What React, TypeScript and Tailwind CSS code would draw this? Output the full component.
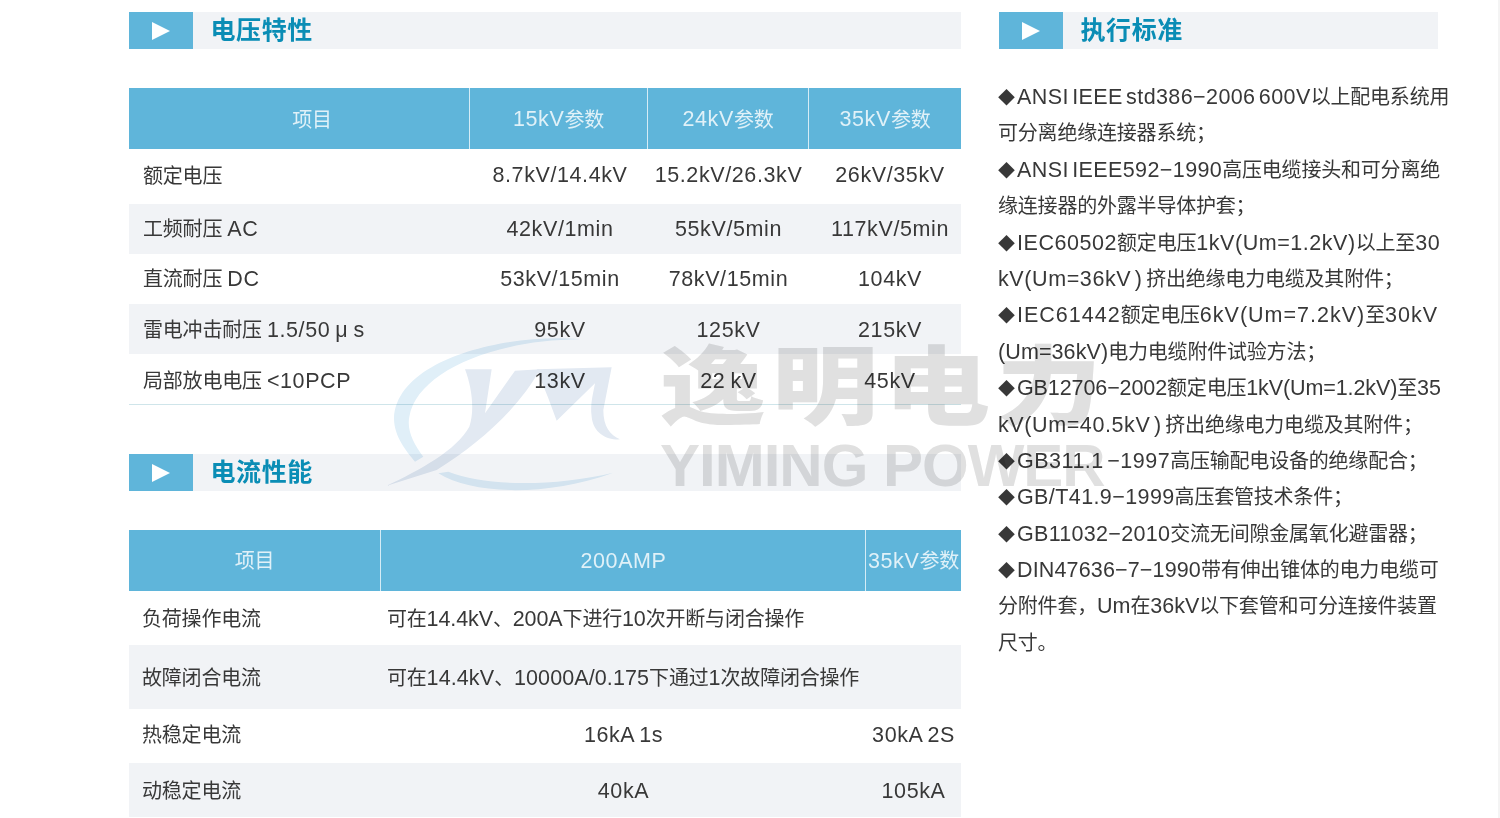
import React from "react";

const font = "font-['Liberation_Sans','Noto_Sans_CJK_SC',sans-serif]";

const voltageRows = [
  { cls: "h-[55px] pb-[2px]", cells: ["额定电压", "8.7kV/14.4kV", "15.2kV/26.3kV", "26kV/35kV"] },
  { cls: "h-[50px] bg-[#f1f3f6]", cells: ["工频耐压 AC", "42kV/1min", "55kV/5min", "117kV/5min"] },
  { cls: "h-[50px]", cells: ["直流耐压 DC", "53kV/15min", "78kV/15min", "104kV"] },
  { cls: "h-[50px] bg-[#f1f3f6] pt-[2px]", cells: ["雷电冲击耐压 1.5/50 μ s", "95kV", "125kV", "215kV"] },
  { cls: "h-[50px] pt-[4px]", cells: ["局部放电电压 <10PCP", "13kV", "22 kV", "45kV"] },
];

// the lines are justified in the picture, so each has its own latin spacing
const standards = [
  { text: "◆ANSI IEEE std386−2006 600V以上配电系统用", track: "tracking-[0.4px]" },
  { text: "可分离绝缘连接器系统；", track: "tracking-[0.6px]" },
  { text: "◆ANSI IEEE592−1990高压电缆接头和可分离绝", track: "tracking-[0.4px]" },
  { text: "缘连接器的外露半导体护套；", track: "tracking-[0.6px]" },
  { text: "◆IEC60502额定电压1kV(Um=1.2kV)以上至30", track: "tracking-[0.55px]" },
  { text: "kV(Um=36kV ) 挤出绝缘电力电缆及其附件；", track: "tracking-[0.6px]" },
  { text: "◆IEC61442额定电压6kV(Um=7.2kV)至30kV", track: "tracking-[1px]" },
  { text: "(Um=36kV)电力电缆附件试验方法；", track: "tracking-[0.1px]" },
  { text: "◆GB12706−2002额定电压1kV(Um=1.2kV)至35", track: "tracking-[-0.1px]" },
  { text: "kV(Um=40.5kV ) 挤出绝缘电力电缆及其附件；", track: "tracking-[0.6px]" },
  { text: "◆GB311.1 −1997高压输配电设备的绝缘配合；", track: "tracking-[0.5px]" },
  { text: "◆GB/T41.9−1999高压套管技术条件；", track: "tracking-[0.4px]" },
  { text: "◆GB11032−2010交流无间隙金属氧化避雷器；", track: "tracking-[0.3px]" },
  { text: "◆DIN47636−7−1990带有伸出锥体的电力电缆可", track: "tracking-[0.15px]" },
  { text: "分附件套，Um在36kV以下套管和可分连接件装置", track: "tracking-[0px]" },
  { text: "尺寸。", track: "tracking-[0.6px]" },
];

// latin and chinese runs have different size and spacing in the picture
function Mix({ text, track = "tracking-[0.6px]" }: { text: string; track?: string }) {
  const parts = text.split(/([\u4e00-\u9fff；，。、]+|◆)/).filter(Boolean);
  return (
    <>
      {parts.map((part, i) => {
        if (part === "◆") {
          return <span key={i} className="mr-[2px] text-[17px] tracking-normal">{part}</span>;
        }
        if (/[\u4e00-\u9fff；，。、]/.test(part)) {
          return <span key={i} className="text-[20px] tracking-[-0.2px]">{part}</span>;
        }
        return <span key={i} className={`text-[21.5px] ${track}`}>{part}</span>;
      })}
    </>
  );
}

function Heading({ title }: { title: string }) {
  return (
    <div className="flex h-[37px] items-center bg-[#f1f3f6]">
      <div className="flex h-full w-16 items-center justify-center bg-[#5fb5da]">
        <div className="h-0 w-0 border-y-[9.5px] border-l-[18px] border-y-transparent border-l-white" />
      </div>
      <span className="ml-[17.5px] text-[25px] leading-none font-semibold tracking-[0.6px] text-[#0a8db5]">
        {title}
      </span>
    </div>
  );
}

function Watermark() {
  return (
    <div className="pointer-events-none absolute top-[330px] left-[380px] flex mix-blend-multiply">
      <svg width="250" height="170" viewBox="0 0 750 510">
        <path
          d="M600 28C400 8 50 80 42 265C42 320 80 365 105 395L130 380C100 340 80 300 88 260C110 130 330 30 600 28Z"
          fill="#e0eff8"
        />
        <path d="M175 430C280 495 500 500 700 428C520 470 320 470 205 425Z" fill="#e0eff8" />
        <path
          d="M255 118L335 118L315 250L405 122L480 118C420 230 300 340 170 420L18 468C120 420 230 360 268 290C285 240 275 170 255 118Z"
          fill="#e2e9f2"
        />
        <path
          d="M470 118L695 112L670 240C670 290 690 315 720 328C680 330 640 310 635 260C630 220 640 190 645 160L530 272L505 205Z"
          fill="#e2e9f2"
        />
      </svg>
      <div className="ml-[30px] flex w-[450px] flex-col">
        <span className="mt-[15px] h-[91px] origin-top scale-y-[0.81] text-[106px] leading-[106px] font-black tracking-[6px] whitespace-nowrap text-[#e0e0e0]">
          逸明电力
        </span>
        <span className="text-[60px] leading-[60px] font-bold tracking-[-1px] whitespace-nowrap text-[#e0e0e0]">
          YIMING POWER
        </span>
      </div>
    </div>
  );
}

export default function App() {
  return (
    <div className={`${font} relative flex h-[818px] w-[1500px] overflow-hidden border-r-2 border-[#f4f4f4] bg-white pt-3 pl-[129px] text-[#383838]`}>
      <div className="w-[832px] [word-spacing:-1.5px]">
        <Heading title="电压特性" />

        {/* voltage table */}
        <div className="mt-[39px] flex h-[61px] bg-[#5fb5da] text-[#e0f1f8]">
          <div className="flex w-[340px] items-center justify-center pt-[2px] pl-[26px]"><Mix text="项目" /></div>
          <div className="flex w-[178px] items-center justify-center border-l border-[#d5ecf6] pt-[2px]"><Mix text="15kV参数" /></div>
          <div className="flex w-[161px] items-center justify-center border-l border-[#d5ecf6] pt-[2px]"><Mix text="24kV参数" /></div>
          <div className="flex flex-1 items-center justify-center border-l border-[#d5ecf6] pt-[2px]"><Mix text="35kV参数" /></div>
        </div>
        {voltageRows.map((row) => (
          <div key={row.cells[0]} className={`flex items-center ${row.cls}`}>
            <div className="w-[341px] pl-[14px] whitespace-nowrap"><Mix text={row.cells[0]} /></div>
            <div className="w-[178px] pl-[2px] text-center whitespace-nowrap"><Mix text={row.cells[1]} /></div>
            <div className="w-[161px] text-center whitespace-nowrap"><Mix text={row.cells[2]} /></div>
            <div className="flex-1 pl-[10px] text-center whitespace-nowrap"><Mix text={row.cells[3]} /></div>
          </div>
        ))}
        <div className="h-px bg-[#cfe5ea]" />

        <div className="mt-[49px]">
          <Heading title="电流性能" />
        </div>

        {/* current table */}
        <div className="mt-[39px] flex h-[61px] bg-[#5fb5da] text-[#e0f1f8]">
          <div className="flex w-[251px] items-center justify-center pt-px"><Mix text="项目" /></div>
          <div className="flex w-[485px] items-center justify-center border-l border-[#d5ecf6] pt-px pl-px"><Mix text="200AMP" /></div>
          <div className="flex flex-1 items-center justify-center border-l border-[#d5ecf6] pt-px whitespace-nowrap"><Mix text="35kV参数" /></div>
        </div>
        <div className="flex h-[54px] items-center pt-[2px]">
          <div className="w-[258px] pl-[13px]"><Mix text="负荷操作电流" /></div>
          <div className="whitespace-nowrap"><Mix text="可在14.4kV、200A下进行10次开断与闭合操作" track="tracking-[-0.1px]" /></div>
        </div>
        <div className="flex h-16 items-center bg-[#f1f3f6] pt-[2px]">
          <div className="w-[258px] pl-[13px]"><Mix text="故障闭合电流" /></div>
          <div className="whitespace-nowrap"><Mix text="可在14.4kV、10000A/0.175下通过1次故障闭合操作" track="tracking-[0.1px]" /></div>
        </div>
        <div className="flex h-[54px] items-center pb-[2px]">
          <div className="w-[252px] pl-[13px]"><Mix text="热稳定电流" /></div>
          <div className="w-[485px] text-center"><Mix text="16kA 1s" /></div>
          <div className="flex-1 text-center whitespace-nowrap"><Mix text="30kA 2S" /></div>
        </div>
        <div className="flex h-[54px] items-center bg-[#f1f3f6] pt-[2px]">
          <div className="w-[252px] pl-[13px]"><Mix text="动稳定电流" /></div>
          <div className="w-[485px] text-center"><Mix text="40kA" /></div>
          <div className="flex-1 text-center"><Mix text="105kA" /></div>
        </div>
      </div>

      <div className="ml-[38px] w-[439px]">
        <Heading title="执行标准" />
        <div className="mt-[30px] -ml-px [word-spacing:-3px]">
          {standards.map((line) => (
            <p key={line.text} className="h-[36.4px] leading-[36.4px] whitespace-nowrap">
              <Mix text={line.text} track={line.track} />
            </p>
          ))}
        </div>
      </div>

      <Watermark />
    </div>
  );
}
